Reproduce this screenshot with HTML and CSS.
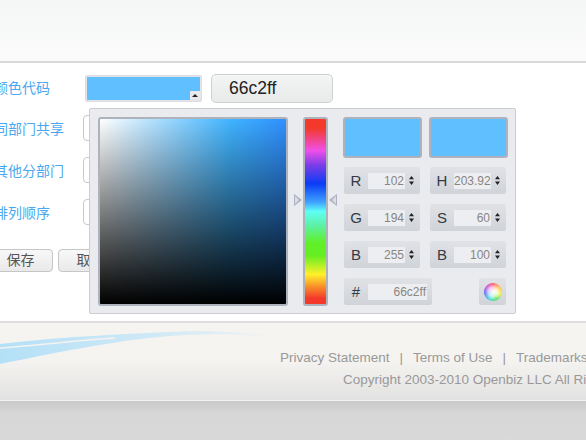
FILE: index.html
```html
<!DOCTYPE html>
<html lang="zh-CN">
<head>
  <meta charset="UTF-8" />
  <meta name="viewport" content="width=device-width, initial-scale=1" />
  <title>颜色代码</title>
  <link rel="stylesheet" href="styles.css">
</head>
<body>
  <div class="top-band"></div>

  <main class="form">
    <div class="form-row first">
      <label class="form-label">颜色代码</label>
      <div class="swatch-field">
        <span class="swatch-fill"></span>
        <span class="swatch-toggle"><i></i></span>
      </div>
      <div class="text-field">66c2ff</div>
    </div>
    <div class="form-row">
      <label class="form-label">同部门共享</label>
      <div class="select-stub"></div>
    </div>
    <div class="form-row">
      <label class="form-label">其他分部门</label>
      <div class="select-stub"></div>
    </div>
    <div class="form-row">
      <label class="form-label">排列顺序</label>
      <div class="select-stub"></div>
    </div>
    <div class="button-group">
      <button class="btn btn-save">保存</button>
      <button class="btn btn-cancel">取消</button>
    </div>

    <!-- colour picker popup, sits over the form -->
    <div class="picker">
      <div class="picker-sb"></div>
      <div class="picker-hue">
        <div class="hue-bar"></div>
        <span class="hue-arrow left"></span>
        <span class="hue-arrow right"></span>
      </div>
      <div class="picker-side">
        <div class="preview"></div>
        <div class="preview"></div>

        <div class="field"><b>R</b><span class="value">102</span><span class="spin"></span></div>
        <div class="field"><b>H</b><span class="value">203.92</span><span class="spin"></span></div>
        <div class="field"><b>G</b><span class="value">194</span><span class="spin"></span></div>
        <div class="field"><b>S</b><span class="value">60</span><span class="spin"></span></div>
        <div class="field"><b>B</b><span class="value">255</span><span class="spin"></span></div>
        <div class="field"><b>B</b><span class="value">100</span><span class="spin"></span></div>

        <div class="field hex"><b>#</b><span class="value">66c2ff</span></div>
        <div class="wheel-btn"><span class="wheel"></span></div>
      </div>
    </div>
  </main>

  <footer class="footer">
    <svg class="swoosh" width="300" height="50" viewBox="0 0 300 50" aria-hidden="true">
      <defs>
        <linearGradient id="swooshFade" x1="0" y1="0" x2="1" y2="0">
          <stop offset="0" stop-color="#b4e0f7" />
          <stop offset="0.55" stop-color="#cfe9f6" />
          <stop offset="1" stop-color="#f4f3f0" />
        </linearGradient>
      </defs>
      <path d="M0 16 C60 9 130 5 200 3 C230 3 260 6 280 10 C240 5 200 6 170 8 C110 13 50 26 0 36 Z" fill="url(#swooshFade)" />
      <path d="M0 20 C30 18 70 13 115 10" fill="none" stroke="#f4f3f0" stroke-width="1.5" />
    </svg>
    <nav class="footer-links">
      <a>Privacy Statement</a><span>|</span><a>Terms of Use</a><span>|</span><a>Trademarks</a>
    </nav>
    <p class="copyright">Copyright 2003-2010 Openbiz LLC All Rights Reserved</p>
  </footer>
  <div class="bottom-band"></div>
</body>
</html>
```

FILE: styles.css
```css
* { box-sizing: border-box; }
html, body {
  height: 100%;
}
body {
  margin: 0;
  overflow: hidden;
  background: #fff;
  font-family: "Liberation Sans", "Noto Sans CJK SC", sans-serif;
  display: flex;
  flex-direction: column;
}

.top-band {
  height: 63px;
  flex: none;
  background: linear-gradient(#f5f6f6, #fafbfa);
  border-bottom: 2px solid #d9d9db;
}

/* form */
.form {
  position: relative;
  height: 258px;
  flex: none;
  padding-top: 11px;
}
.form-row {
  display: flex;
  align-items: center;
  height: 26px;
  margin: 0 0 16px -6px;
}
.form-row.first {
  height: 29px;
  margin-bottom: 12px;
}
.form-label {
  width: 89px;
  flex: none;
  font-size: 14px;
  color: #4aa8f0;
}
.form-row.first .form-label {
  width: 91px;
  margin-top: -3px;
}

.swatch-field {
  position: relative;
  width: 117px;
  height: 27px;
  padding: 1px;
  background: #e4e5ea;
  border: 1px solid #dcdde2;
  border-radius: 2px;
}
.swatch-fill {
  display: block;
  height: 100%;
  background: #60bfff;
}
.swatch-toggle {
  position: absolute;
  right: 1px;
  bottom: 1px;
  width: 10px;
  height: 9px;
  background: #e8e9ec;
  display: flex;
  align-items: center;
  justify-content: center;
}
.swatch-toggle i {
  border: 3px solid transparent;
  border-top: 0;
  border-bottom: 3px solid #222;
}
.text-field {
  width: 122px;
  height: 29px;
  margin-left: 9px;
  padding-left: 17px;
  line-height: 27px;
  font-size: 17.5px;
  color: #222;
  background: linear-gradient(#f3f4f4, #e8eaea);
  border: 1px solid #cfd1d1;
  border-radius: 5px;
}
.select-stub {
  width: 120px;
  height: 26px;
  background: #fff;
  border: 1px solid #c9c9c9;
  border-radius: 4px;
}

.button-group {
  display: flex;
  gap: 5px;
  margin: 24px 0 0 -12px;
}
.btn {
  width: 65px;
  height: 23px;
  padding: 0;
  font-family: inherit;
  font-size: 14px;
  line-height: 21px;
  color: #555;
  background: linear-gradient(#f8f8f8, #e9e9e9);
  border: 1px solid #c6c6c6;
  border-radius: 4px;
}

/* picker popup */
.picker {
  position: absolute;
  left: 89px;
  top: 45px;
  width: 427px;
  height: 206px;
  display: flex;
  padding: 8px;
  background: #eaebef;
  border: 1px solid #cbcdd4;
  border-radius: 2px;
}
.picker-sb {
  width: 190px;
  height: 189px;
  flex: none;
  border: 2px solid #aeb2bd;
  border-radius: 3px;
  background:
    linear-gradient(to bottom, transparent, #000),
    linear-gradient(to right, #fff, #40b4ff 70%, #3090ff);
}
.picker-hue {
  position: relative;
  width: 25px;
  height: 189px;
  flex: none;
  margin: 0 15px;
}
.hue-bar {
  height: 100%;
  border: 2px solid #aeb2bd;
  border-radius: 3px;
  background: linear-gradient(to bottom,
    #f33a2a 0%, #f33a2a 5%, #f04fe8 17%, #7a3de8 25%, #0a3cf5 35%, #3fa2ff 45%,
    #5ffff5 50%, #5cf0a0 58%, #60f028 67%, #66ee22 74%, #fff02a 84%, #f88a2a 91%, #f4392a 97%);
}
.hue-arrow {
  position: absolute;
  top: 77px;
  width: 8px;
  height: 12px;
  background: #adb1c0;
}
.hue-arrow::after {
  content: "";
  position: absolute;
  inset: 2px;
  background: #dcdee5;
}
.hue-arrow.left {
  left: -9px;
  clip-path: polygon(0 0, 100% 50%, 0 100%);
}
.hue-arrow.left::after {
  inset: 2px 3px 2px 1px;
  clip-path: polygon(0 0, 100% 50%, 0 100%);
}
.hue-arrow.right {
  right: -9px;
  clip-path: polygon(100% 0, 0 50%, 100% 100%);
}
.hue-arrow.right::after {
  inset: 2px 1px 2px 3px;
  clip-path: polygon(100% 0, 0 50%, 100% 100%);
}

.picker-side {
  width: 165px;
  display: grid;
  grid-template-columns: 79px 79px;
  grid-template-rows: 40px 27px 27px 27px 27px;
  column-gap: 7px;
  row-gap: 10px;
  align-content: start;
}
.preview {
  height: 41px;
  background: #60bfff;
  border: 2px solid #aeb2bd;
  border-radius: 3px;
}
.field {
  width: 76px;
  margin-left: 1px;
  display: flex;
  align-items: center;
  background: linear-gradient(#e0e2e6, #d0d3d8);
  border-radius: 2px;
  font-size: 12px;
}
.field b {
  width: 24px;
  flex: none;
  text-align: center;
  font-size: 15px;
  font-weight: normal;
  color: #333b47;
}
.field .value {
  width: 37px;
  height: 16px;
  flex: none;
  overflow: hidden;
  padding-right: 1px;
  text-align: right;
  line-height: 16px;
  color: #8a8580;
  background: #eceef1;
  white-space: nowrap;
}
.field .spin {
  width: 5px;
  height: 9px;
  margin-left: 4px;
  background: #222;
  clip-path: polygon(50% 0, 100% 35%, 0 35%, 0 62%, 100% 62%, 50% 100%, 0 62%, 0 35%);
}
.field.hex {
  width: 88px;
}
.field.hex .value {
  width: 59px;
}
.wheel-btn {
  width: 27px;
  margin-left: 50px;
  display: flex;
  align-items: center;
  justify-content: center;
  background: linear-gradient(#e0e2e6, #d0d3d8);
  border-radius: 2px;
}
.wheel {
  width: 18px;
  height: 18px;
  border-radius: 50%;
  background:
    radial-gradient(circle, #fff 0%, rgba(255,255,255,.75) 35%, rgba(255,255,255,0) 72%),
    conic-gradient(#ff3f5a, #ffb52a, #e9ef3a, #3ee04a, #2ad8d8, #3a6aff, #c83ae0, #ff3f5a);
}

/* footer */
.footer {
  position: relative;
  height: 80px;
  flex: none;
  overflow: hidden;
  padding-top: 26px;
  white-space: nowrap;
  font-size: 13.5px;
  color: #999;
  background: linear-gradient(#f5f4f1 0%, #f4f3f0 50%, #e2e2e2 100%);
  border-top: 2px solid #dedede;
  border-bottom: 1px solid #f2f2f2;
}
.swoosh {
  position: absolute;
  left: 0;
  top: 5px;
}
.footer-links {
  position: relative;
  display: flex;
  gap: 10px;
  margin-left: 280px;
  line-height: 17px;
}
.copyright {
  position: relative;
  margin: 5px 0 0 343px;
  line-height: 17px;
}
.bottom-band {
  flex: 1;
  background: linear-gradient(#c9c9c9, #d6d6d6 30%, #d9d9d9);
}
```
